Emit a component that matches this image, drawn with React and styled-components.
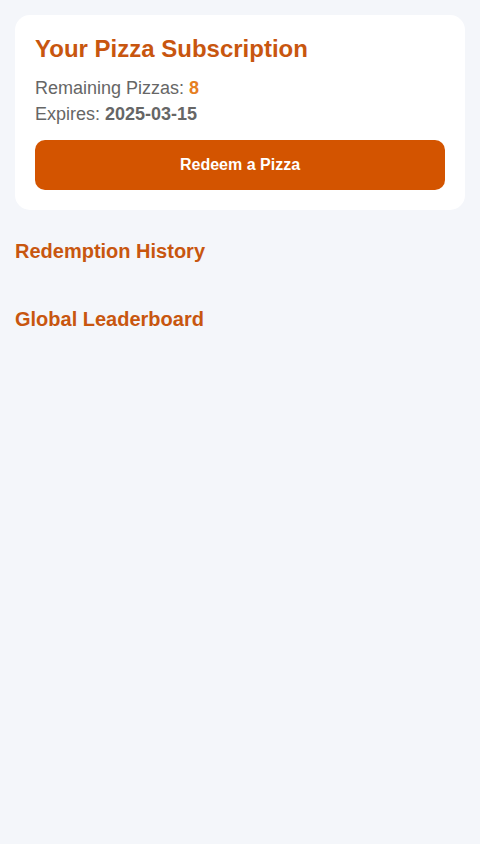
import styled, { createGlobalStyle } from "styled-components"

const GlobalStyle = createGlobalStyle`
  * {
    box-sizing: border-box;
  }

  body {
    margin: 0;
    background-color: #f4f6fa;
    color: #666666;
    font-family: "Liberation Sans", Arial, sans-serif;
  }
`

const Container = styled.main`
  padding: 15px;
`

const Card = styled.section`
  padding: 20px;
  margin-bottom: 30px;
  background-color: white;
  border-radius: 15px;
`

const Title = styled.h1`
  margin: 0 0 15px;
  color: #c8560f;
  font-size: 24px;
  line-height: 28px;
`

const Info = styled.p`
  margin: 0 0 5px;
  font-size: 18px;
  line-height: 21px;
`

const Value = styled.strong`
  color: ${(props) => (props.$highlight ? "#e67e22" : "inherit")};
`

const Button = styled.button`
  width: 100%;
  margin-top: 10px;
  padding: 15px;
  border: none;
  border-radius: 10px;
  background-color: #d35400;
  color: white;
  font-family: inherit;
  font-size: 16px;
  font-weight: bold;
  line-height: 20px;
  cursor: pointer;
`

const Section = styled.section`
  margin-bottom: 45px;
`

const SectionTitle = styled.h2`
  margin: 0;
  color: #c8560f;
  font-size: 20px;
  line-height: 23px;
`

const subscription = {
  remaining: 8,
  expires: "2025-03-15",
}

export default function App() {
  return (
    <>
      <GlobalStyle />
      <Container>
        <Card>
          <Title>Your Pizza Subscription</Title>
          <Info>
            Remaining Pizzas: <Value $highlight>{subscription.remaining}</Value>
          </Info>
          <Info>
            Expires: <Value>{subscription.expires}</Value>
          </Info>
          <Button type="button">Redeem a Pizza</Button>
        </Card>
        <Section>
          <SectionTitle>Redemption History</SectionTitle>
        </Section>
        <Section>
          <SectionTitle>Global Leaderboard</SectionTitle>
        </Section>
      </Container>
    </>
  )
}
